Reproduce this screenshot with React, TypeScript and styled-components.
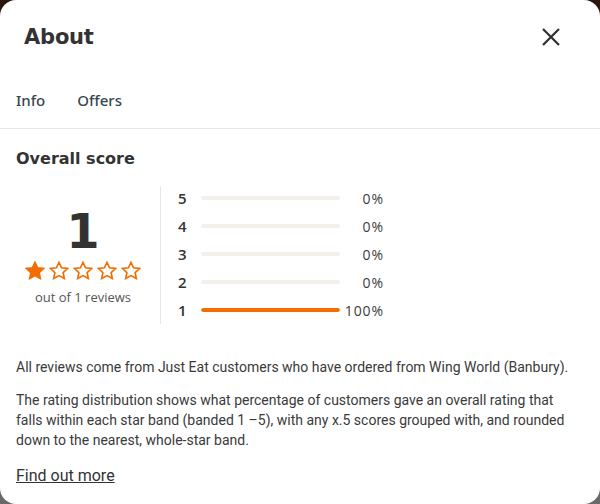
import styled, { createGlobalStyle } from 'styled-components'

const GlobalStyle = createGlobalStyle`
  html, body {
    margin: 0;
    padding: 0;
    background: linear-gradient(#2a160a 0%, #4a3a30 50%, #6a6a6a 100%);
  }
  * {
    box-sizing: border-box;
  }
`

interface Band {
  star: number
  percent: number
}

const bands: Band[] = [
  { star: 5, percent: 0 },
  { star: 4, percent: 0 },
  { star: 3, percent: 0 },
  { star: 2, percent: 0 },
  { star: 1, percent: 100 },
]

const Star = ({ filled }: { filled: boolean }) => (
  <svg width="20" height="19" viewBox="0 0 24 23">
    <path
      d="M12 1.6l3.1 6.6 7.2.9-5.3 5 1.4 7.1L12 17.7l-6.4 3.5 1.4-7.1-5.3-5 7.2-.9z"
      fill={filled ? '#f36d00' : 'none'}
      stroke="#f36d00"
      strokeWidth="2"
    />
  </svg>
)

const App = () => {
  return (
    <>
      <GlobalStyle />
      <Modal>
        <Header>
          <Title>About</Title>
          <CloseButton aria-label="Close">
            <svg width="20" height="20" viewBox="0 0 20 20">
              <path d="M2 2L18 18M18 2L2 18" stroke="#2f2f2f" strokeWidth="2.2" />
            </svg>
          </CloseButton>
        </Header>
        <Tabs>
          <Tab>Info</Tab>
          <Tab>Offers</Tab>
        </Tabs>
        <Content>
          <SectionTitle>Overall score</SectionTitle>
          <Score>
            <Summary>
              <BigNumber>1</BigNumber>
              <Stars>
                {[1, 2, 3, 4, 5].map((n) => (
                  <Star key={n} filled={n <= 1} />
                ))}
              </Stars>
              <ReviewCount>out of 1 reviews</ReviewCount>
            </Summary>
            <Bands>
              {bands.map((band) => (
                <BandRow key={band.star}>
                  <BandLabel>{band.star}</BandLabel>
                  <Track>
                    <Fill style={{ width: `${band.percent}%` }} />
                  </Track>
                  <Percent>{band.percent}%</Percent>
                </BandRow>
              ))}
            </Bands>
          </Score>
          <Text>
            All reviews come from Just Eat customers who have ordered from Wing
            World (Banbury).
          </Text>
          <Text>
            The rating distribution shows what percentage of customers gave an
            overall rating that falls within each star band (banded 1 –5), with
            any x.5 scores grouped with, and rounded down to the nearest,
            whole-star band.
          </Text>
          <Link href="#">Find out more</Link>
        </Content>
      </Modal>
    </>
  )
}

const Modal = styled.div`
  width: 600px;
  height: 504px;
  background: #fff;
  border-radius: 16px;
  overflow: hidden;
  font-family: 'Roboto', sans-serif;
  color: #333;
`

const Header = styled.div`
  display: flex;
  align-items: center;
  justify-content: space-between;
  height: 74px;
  padding: 0 39px 0 24px;
`

const Title = styled.h1`
  margin: 0;
  font-family: 'DejaVu Sans', sans-serif;
  font-weight: 700;
  font-size: 21px;
  letter-spacing: -0.2px;
  color: #333;
`

const CloseButton = styled.button`
  display: flex;
  border: 0;
  background: none;
  padding: 0;
  cursor: pointer;
`

const Tabs = styled.div`
  display: flex;
  gap: 32px;
  height: 55px;
  padding: 0 16px 3px;
  align-items: center;
  border-bottom: 1px solid #e6e6e6;
`

const Tab = styled.div`
  font-family: 'Noto Sans', sans-serif;
  font-weight: 500;
  font-size: 15px;
  color: #37474f;
`

const Content = styled.div`
  padding: 19px 24px 0 16px;
`

const SectionTitle = styled.h2`
  margin: 0;
  font-family: 'DejaVu Sans', sans-serif;
  font-weight: 700;
  font-size: 16px;
  line-height: 22px;
  color: #333;
`

const Score = styled.div`
  display: flex;
  margin-top: 16px;
`

const Summary = styled.div`
  width: 145px;
  display: flex;
  flex-direction: column;
  align-items: center;
  justify-content: center;
  border-right: 1px solid #e6e6e6;
  padding: 2px 10px 0 0;
`

const BigNumber = styled.div`
  font-family: 'DejaVu Sans', sans-serif;
  font-weight: 700;
  font-size: 48px;
  line-height: 50px;
  color: #333;
`

const Stars = styled.div`
  display: flex;
  gap: 4px;
  margin-top: 5px;
`

const ReviewCount = styled.div`
  margin-top: 8px;
  font-family: 'Open Sans', sans-serif;
  font-size: 13px;
  color: #555;
`

const Bands = styled.div`
  display: flex;
  flex-direction: column;
  padding-left: 17px;
  margin-top: -2px;
`

const BandRow = styled.div`
  display: flex;
  align-items: center;
  height: 28px;
`

const BandLabel = styled.div`
  width: 23px;
  font-family: 'Open Sans', sans-serif;
  font-weight: 600;
  font-size: 15px;
  color: #333;
`

const Track = styled.div`
  width: 139px;
  height: 4px;
  border-radius: 2px;
  background: #f3f0eb;
  overflow: hidden;
`

const Fill = styled.div`
  height: 100%;
  border-radius: 2px;
  background: #f36d00;
`

const Percent = styled.div`
  width: 44px;
  text-align: right;
  font-family: 'Open Sans', sans-serif;
  font-size: 14px;
  letter-spacing: 0.9px;
  color: #3c3c3c;
`

const Text = styled.p`
  margin: 33px 0 0;
  font-size: 14px;
  line-height: 20px;
  color: #3a3a3a;

  & + & {
    margin-top: 13px;
  }
`

const Link = styled.a`
  display: inline-block;
  margin-top: 16px;
  font-size: 16px;
  color: #333;
  text-decoration: underline;
`

export default App
